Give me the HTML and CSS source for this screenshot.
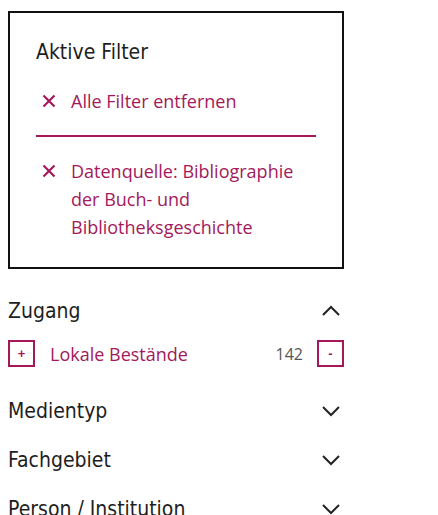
FILE: index.html
```html
<!DOCTYPE html>
<html lang="de">
<head>
    <meta charset="UTF-8">
    <title>Filter</title>
    <link rel="stylesheet" href="styles.css">
</head>
<body>

    <!-- Aktive Filter -->
    <div class="active-filters">
        <h2>Aktive Filter</h2>
        <a class="filter-remove" href="#">
            <svg class="x" width="14" height="14" viewBox="0 0 14 14"><path d="M1.5 1.5 L12.5 12.5 M12.5 1.5 L1.5 12.5" stroke="#a3195b" stroke-width="2.2"/></svg>
            <span>Alle Filter entfernen</span>
        </a>
        <hr class="divider">
        <a class="filter-remove" href="#">
            <svg class="x" width="14" height="14" viewBox="0 0 14 14"><path d="M1.5 1.5 L12.5 12.5 M12.5 1.5 L1.5 12.5" stroke="#a3195b" stroke-width="2.2"/></svg>
            <span>Datenquelle: Bibliographie der Buch- und Bibliotheksgeschichte</span>
        </a>
    </div>

    <!-- Facetten -->
    <div class="facet open">
        <div class="facet-head">
            <h3>Zugang</h3>
            <svg class="chev" width="20" height="12" viewBox="0 0 20 12"><path d="M2 10 L10 2 L18 10" fill="none" stroke="#222" stroke-width="2"/></svg>
        </div>
        <div class="facet-item">
            <button class="sq">+</button>
            <span class="facet-label">Lokale Bestände</span>
            <span class="count">142</span>
            <button class="sq">-</button>
        </div>
    </div>

    <div class="facet">
        <div class="facet-head">
            <h3>Medientyp</h3>
            <svg class="chev" width="20" height="12" viewBox="0 0 20 12"><path d="M2 2 L10 10 L18 2" fill="none" stroke="#222" stroke-width="2"/></svg>
        </div>
    </div>

    <div class="facet">
        <div class="facet-head">
            <h3>Fachgebiet</h3>
            <svg class="chev" width="20" height="12" viewBox="0 0 20 12"><path d="M2 2 L10 10 L18 2" fill="none" stroke="#222" stroke-width="2"/></svg>
        </div>
    </div>

    <div class="facet">
        <div class="facet-head">
            <h3>Person / Institution</h3>
            <svg class="chev" width="20" height="12" viewBox="0 0 20 12"><path d="M2 2 L10 10 L18 2" fill="none" stroke="#222" stroke-width="2"/></svg>
        </div>
    </div>

</body>
</html>
```

FILE: styles.css
```css
body {
    font-family: "Open Sans", "Noto Sans", sans-serif;
    background-color: #fff;
    color: #1e1e1e;
    margin: 0;
    padding: 11px 0 0 8px;
    width: 336px;
}

h2, h3 {
    font-family: "DejaVu Sans Condensed", "DejaVu Sans", sans-serif;
    font-stretch: condensed;
    font-weight: normal;
    margin: 0;
}

.active-filters {
    border: 2px solid #111;
    padding: 26px 26px 26px 26px;
}

.active-filters h2 {
    font-size: 21px;
    line-height: 26px;
    margin-bottom: 22px;
}

.filter-remove {
    display: flex;
    align-items: flex-start;
    gap: 15px;
    color: #a3195b;
    text-decoration: none;
    font-size: 18px;
    line-height: 28px;
    padding-left: 6px;
}

.filter-remove .x {
    flex: none;
    margin-top: 7px;
}

.divider {
    border: none;
    border-top: 2px solid #a3195b;
    margin: 20px 0 20px 0;
}

.facet {
    margin-top: 29px;
}

.facet.open {
    padding-bottom: 8px;
}

.facet + .facet {
    margin-top: 23px;
}

.facet-head {
    display: flex;
    justify-content: space-between;
    align-items: center;
}

.facet-head h3 {
    font-size: 21px;
    line-height: 26px;
}

.chev {
    margin-right: 3px;
}

.facet-item {
    display: flex;
    align-items: center;
    margin-top: 16px;
}

.sq {
    width: 27px;
    height: 27px;
    border: 2px solid #a3195b;
    background: #fff;
    color: #a3195b;
    font-size: 13px;
    font-weight: bold;
    padding: 0;
    line-height: 1;
}

.facet-label {
    color: #a3195b;
    font-size: 18px;
    margin-left: 15px;
    flex: 1;
}

.count {
    color: #555;
    font-size: 16px;
    margin-right: 14px;
}
```
